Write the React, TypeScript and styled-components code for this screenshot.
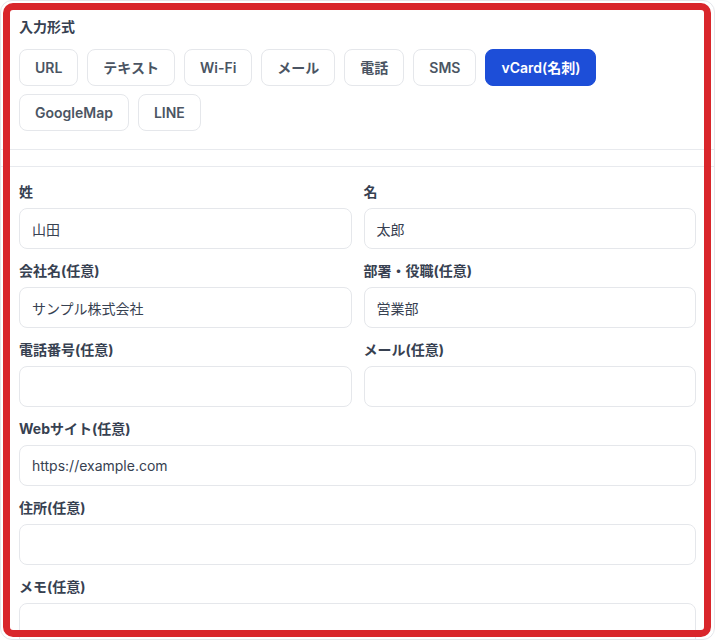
import { styled, createGlobalStyle } from "styled-components";

const GlobalStyle = createGlobalStyle`
  * { box-sizing: border-box; }
  body {
    margin: 0;
    background: #ffffff;
    font-family: "Inter", "Noto Sans CJK JP", sans-serif;
    color: #374151;
  }
`;

const TYPES = ["URL", "テキスト", "Wi-Fi", "メール", "電話", "SMS", "vCard(名刺)", "GoogleMap", "LINE"];

type Field = { label: string; value?: string; wide?: boolean };

const FIELDS: Field[] = [
  { label: "姓", value: "山田" },
  { label: "名", value: "太郎" },
  { label: "会社名(任意)", value: "サンプル株式会社" },
  { label: "部署・役職(任意)", value: "営業部" },
  { label: "電話番号(任意)" },
  { label: "メール(任意)" },
  { label: "Webサイト(任意)", value: "https://example.com", wide: true },
  { label: "住所(任意)", wide: true },
  { label: "メモ(任意)", wide: true },
];

function App() {
  const active = "vCard(名刺)";

  return (
    <>
      <GlobalStyle />
      <Page>
        <Section>
          <Label>入力形式</Label>
          <TypeList>
            {TYPES.map((t) => (
              <TypeButton key={t} $active={t === active}>
                {t}
              </TypeButton>
            ))}
          </TypeList>
        </Section>
        <FormSection>
          <FormGrid>
            {FIELDS.map((f) => (
              <FieldGroup key={f.label} $wide={f.wide}>
                <Label>{f.label}</Label>
                <Input $tall={f.label === "メモ(任意)"}>{f.value}</Input>
              </FieldGroup>
            ))}
          </FormGrid>
        </FormSection>
      </Page>
      <Highlight />
    </>
  );
}

export default App;

const Page = styled.div`
  width: 715px;
  height: 640px;
  overflow: hidden;
  border: 1px solid #e5e7eb;
  border-radius: 12px;
  display: flex;
  flex-direction: column;
  gap: 16px;
`;

const Section = styled.div`
  padding: 16px 18px 18px;
  border-bottom: 1px solid #e8eaee;
  display: flex;
  flex-direction: column;
  gap: 12px;
`;

const FormSection = styled.div`
  padding: 15px 18px 0;
  border-top: 1px solid #e8eaee;
`;

const Label = styled.div`
  font-size: 14px;
  line-height: 20px;
  font-weight: 700;
  color: #374151;
`;

const TypeList = styled.div`
  display: flex;
  flex-wrap: wrap;
  gap: 8px 9px;
`;

const TypeButton = styled.button<{ $active?: boolean }>`
  height: 37px;
  padding: 0 15px;
  border-radius: 8px;
  border: 1px solid ${(p) => (p.$active ? "#1d4ed8" : "#e5e7eb")};
  background: ${(p) => (p.$active ? "#1d4ed8" : "#ffffff")};
  color: ${(p) => (p.$active ? "#ffffff" : "#4b5563")};
  font-family: inherit;
  font-size: 14px;
  font-weight: 600;
  line-height: 20px;
`;

const FormGrid = styled.div`
  display: grid;
  grid-template-columns: 1fr 1fr;
  column-gap: 12px;
  row-gap: 12px;
`;

const FieldGroup = styled.div<{ $wide?: boolean }>`
  grid-column: ${(p) => (p.$wide ? "1 / -1" : "auto")};
  display: flex;
  flex-direction: column;
  gap: 6px;
`;

const Input = styled.div<{ $tall?: boolean }>`
  height: ${(p) => (p.$tall ? "80px" : "41px")};
  border: 1px solid #e5e7eb;
  border-radius: 8px;
  padding: 0 12px;
  display: flex;
  align-items: ${(p) => (p.$tall ? "flex-start" : "center")};
  font-size: 14px;
  color: #374151;
`;

const Highlight = styled.div`
  position: fixed;
  top: 3px;
  left: 3px;
  width: 708px;
  height: 634px;
  border: 7px solid #d9262b;
  border-radius: 10px;
  pointer-events: none;
`;
